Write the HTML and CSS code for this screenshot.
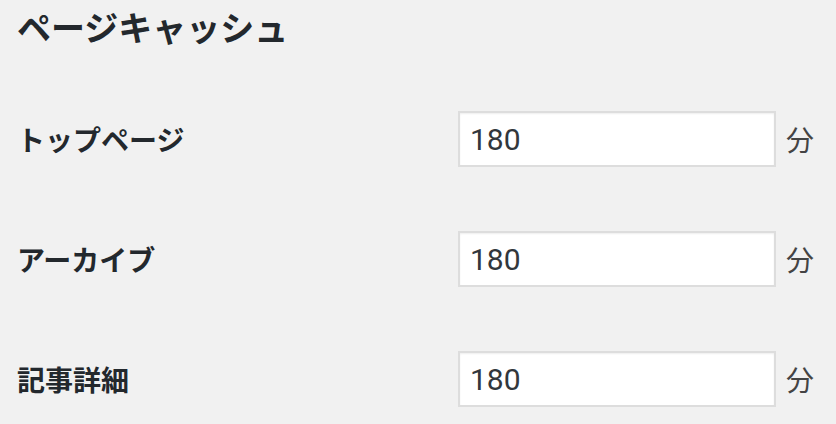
FILE: index.html
```html
<!DOCTYPE html>
<html lang="ja">
<head>
<meta charset="utf-8">
<link rel="stylesheet" href="styles.css">
</head>
<body>
<div class="page">
  <h2 class="title">ページキャッシュ</h2>
  <div class="rows">
    <div class="row">
      <label class="label">トップページ</label>
      <div class="field"><input class="input" type="text" value="180"><span class="unit">分</span></div>
    </div>
    <div class="row">
      <label class="label">アーカイブ</label>
      <div class="field"><input class="input" type="text" value="180"><span class="unit">分</span></div>
    </div>
    <div class="row">
      <label class="label">記事詳細</label>
      <div class="field"><input class="input" type="text" value="180"><span class="unit">分</span></div>
    </div>
  </div>
</div>
</body>
</html>
```
FILE: styles.css
```css
html, body {
  margin: 0;
  padding: 0;
  background: #f1f1f1;
}
.page {
  padding: 0 0 0 17px;
  font-family: "Noto Sans CJK JP", sans-serif;
  color: #23282d;
}
.title {
  margin: 0;
  font-size: 34px;
  font-weight: 700;
  line-height: 54px;
  height: 54px;
}
.rows {
  display: flex;
  flex-direction: column;
  gap: 64px;
  padding-top: 57px;
}
.row {
  display: flex;
  align-items: center;
  height: 56px;
}
.label {
  width: 441px;
  flex: none;
  font-size: 28px;
  font-weight: 700;
  line-height: 40px;
  color: #23282d;
}
.field {
  display: flex;
  align-items: center;
}
.input {
  box-sizing: border-box;
  width: 318px;
  height: 56px;
  margin: 0;
  padding: 0 10px;
  border: 2px solid #dddddd;
  background: #ffffff;
  box-shadow: inset 0 1px 2px rgba(0,0,0,0.07);
  font-family: Roboto, "Liberation Sans", sans-serif;
  font-size: 30px;
  color: #32373c;
  outline: none;
}
.unit {
  margin-left: 10px;
  font-family: "Noto Sans CJK JP", sans-serif;
  font-size: 28px;
  font-weight: 400;
  color: #444444;
}
```
